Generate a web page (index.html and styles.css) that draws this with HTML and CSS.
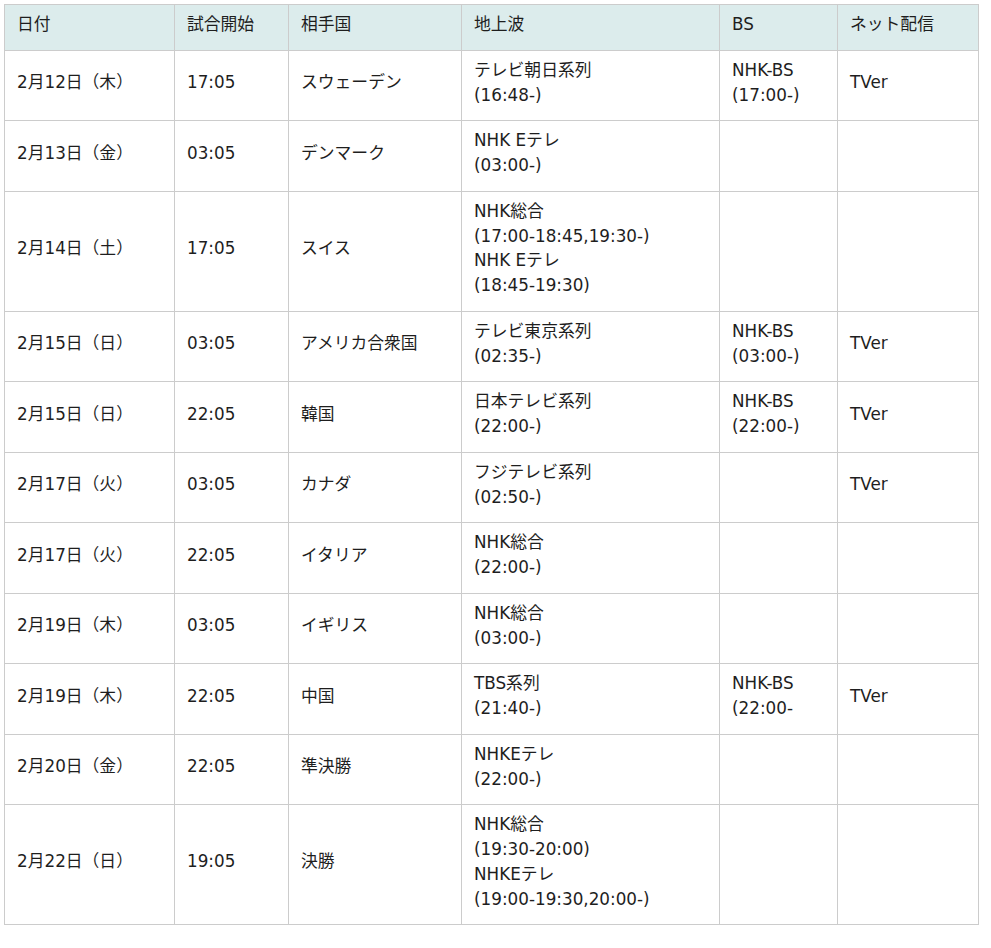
FILE: index.html
```html
<!DOCTYPE html>
<html lang="ja">
<head>
<meta charset="utf-8">
<link rel="stylesheet" href="styles.css">
</head>
<body>
<div class="wrap">
<table class="sched">
<colgroup>
<col class="c1"><col class="c2"><col class="c3"><col class="c4"><col class="c5"><col class="c6">
</colgroup>
<thead>
<tr><th>日付</th><th>試合開始</th><th>相手国</th><th>地上波</th><th>BS</th><th>ネット配信</th></tr>
</thead>
<tbody>
<tr><td>2月12日（木）</td><td>17:05</td><td>スウェーデン</td><td>テレビ朝日系列<br>(16:48-)</td><td>NHK-BS<br>(17:00-)</td><td>TVer</td></tr>
<tr><td>2月13日（金）</td><td>03:05</td><td>デンマーク</td><td>NHK Eテレ<br>(03:00-)</td><td></td><td></td></tr>
<tr><td>2月14日（土）</td><td>17:05</td><td>スイス</td><td>NHK総合<br>(17:00-18:45,19:30-)<br>NHK Eテレ<br>(18:45-19:30)</td><td></td><td></td></tr>
<tr><td>2月15日（日）</td><td>03:05</td><td>アメリカ合衆国</td><td>テレビ東京系列<br>(02:35-)</td><td>NHK-BS<br>(03:00-)</td><td>TVer</td></tr>
<tr><td>2月15日（日）</td><td>22:05</td><td>韓国</td><td>日本テレビ系列<br>(22:00-)</td><td>NHK-BS<br>(22:00-)</td><td>TVer</td></tr>
<tr><td>2月17日（火）</td><td>03:05</td><td>カナダ</td><td>フジテレビ系列<br>(02:50-)</td><td></td><td>TVer</td></tr>
<tr><td>2月17日（火）</td><td>22:05</td><td>イタリア</td><td>NHK総合<br>(22:00-)</td><td></td><td></td></tr>
<tr><td>2月19日（木）</td><td>03:05</td><td>イギリス</td><td>NHK総合<br>(03:00-)</td><td></td><td></td></tr>
<tr><td>2月19日（木）</td><td>22:05</td><td>中国</td><td>TBS系列<br>(21:40-)</td><td>NHK-BS<br>(22:00-</td><td>TVer</td></tr>
<tr><td>2月20日（金）</td><td>22:05</td><td>準決勝</td><td>NHKEテレ<br>(22:00-)</td><td></td><td></td></tr>
<tr><td>2月22日（日）</td><td>19:05</td><td>決勝</td><td>NHK総合<br>(19:30-20:00)<br>NHKEテレ<br>(19:00-19:30,20:00-)</td><td></td><td></td></tr>
</tbody>
</table>
</div>
</body>
</html>
```
FILE: styles.css
```css
html, body {
  margin: 0;
  padding: 0;
  background: #fff;
}
.wrap {
  padding: 4px;
}
.sched {
  border-collapse: collapse;
  table-layout: fixed;
  width: 974px;
  font-family: "DejaVu Sans", "Noto Sans CJK JP", sans-serif;
  font-size: 16.8px;
  line-height: 24.75px;
  color: #1e1e1e;
}
.c1 { width: 170px; }
.c2 { width: 114px; }
.c3 { width: 173px; }
.c4 { width: 258px; }
.c5 { width: 118px; }
.c6 { width: 141px; }
.sched th, .sched td {
  border: 1px solid #cccccc;
  padding: 7px 12px 13px;
  text-align: left;
  vertical-align: middle;
  font-weight: normal;
}
.sched th {
  background: #dcecec;
}
```
